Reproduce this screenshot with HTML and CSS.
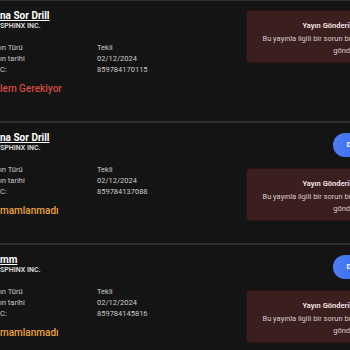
FILE: index.html
```html
<!DOCTYPE html>
<html lang="tr">
<head>
    <meta charset="UTF-8">
    <meta name="viewport" content="width=device-width, initial-scale=1.0">
    <title>Yayınlar</title>
    <link rel="stylesheet" href="styles.css">
</head>
<body>
    <div class="release-list">

        <div class="release-card">
            <div class="release-info">
                <a class="release-title" href="#">na Sor Drill</a>
                <div class="release-label">SPHINX INC.</div>
                <div class="release-meta">
                    <span>ın Türü</span><span>Tekli</span>
                    <span>ın tarihi</span><span>02/12/2024</span>
                    <span>C:</span><span>859784170115</span>
                </div>
                <div class="release-status status-error">lem Gerekiyor</div>
            </div>
            <div class="release-side">
                <div class="alert">
                    <div class="alert-title">Yayın Gönderilirken Hata Oluştu</div>
                    <div class="alert-text">Bu yayınla ilgili bir sorun bulunuyor ve yayın tarafımızdan<br>gönderilmedi.</div>
                </div>
            </div>
        </div>

        <div class="release-card">
            <div class="release-info">
                <a class="release-title" href="#">na Sor Drill</a>
                <div class="release-label">SPHINX INC.</div>
                <div class="release-meta">
                    <span>ın Türü</span><span>Tekli</span>
                    <span>ın tarihi</span><span>02/12/2024</span>
                    <span>C:</span><span>859784137088</span>
                </div>
                <div class="release-status status-pending">mamlanmadı</div>
            </div>
            <div class="release-side">
                <a class="button" href="#">Dağıt</a>
                <div class="alert">
                    <div class="alert-title">Yayın Gönderilirken Hata Oluştu</div>
                    <div class="alert-text">Bu yayınla ilgili bir sorun bulunuyor ve yayın tarafımızdan<br>gönderilmedi.</div>
                </div>
            </div>
        </div>

        <div class="release-card">
            <div class="release-info">
                <a class="release-title" href="#">mm</a>
                <div class="release-label">SPHINX INC.</div>
                <div class="release-meta">
                    <span>ın Türü</span><span>Tekli</span>
                    <span>ın tarihi</span><span>02/12/2024</span>
                    <span>C:</span><span>859784145816</span>
                </div>
                <div class="release-status status-pending">mamlanmadı</div>
            </div>
            <div class="release-side">
                <a class="button" href="#">Dağıt</a>
                <div class="alert">
                    <div class="alert-title">Yayın Gönderilirken Hata Oluştu</div>
                    <div class="alert-text">Bu yayınla ilgili bir sorun bulunuyor ve yayın tarafımızdan<br>gönderilmedi.</div>
                </div>
            </div>
        </div>

    </div>
</body>
</html>
```

FILE: styles.css
```css
body {
    font-family: 'Roboto', 'Liberation Sans', sans-serif;
    background-color: #141414;
    margin: 0;
    padding: 0;
    overflow: hidden;
}

.release-list {
    width: 466px;
    margin-top: -1px;
}

.release-card {
    display: flex;
    justify-content: space-between;
    height: 120px;
    border-top: 2px solid #303030;
}

.release-info {
    padding-top: 9px;
}

.release-title {
    display: block;
    font-size: 10px;
    line-height: 12px;
    font-weight: bold;
    color: #fff;
    text-decoration: underline;
}

.release-label {
    font-size: 7px;
    line-height: 9px;
    font-weight: bold;
    color: #d2d2d2;
}

.release-meta {
    display: grid;
    grid-template-columns: 97px auto;
    margin-top: 11px;
    font-size: 7.5px;
    line-height: 11px;
    color: #cacaca;
}

.release-status {
    margin-top: 8px;
    font-size: 10px;
    line-height: 12px;
    font-weight: 500;
}

.status-error {
    color: #d64a41;
}

.status-pending {
    color: #eaa23c;
}

.release-side {
    width: 220px;
    padding-top: 9px;
    display: flex;
    flex-direction: column;
    align-items: center;
}

.button {
    margin-top: 1px;
    margin-bottom: 11px;
    height: 24px;
    padding: 0 14px;
    border-radius: 12px;
    background: linear-gradient(90deg, #4c7ef5, #3462ea);
    color: #fff;
    font-size: 8px;
    line-height: 24px;
    font-weight: bold;
    text-decoration: none;
}

.alert {
    width: 100%;
    box-sizing: border-box;
    padding: 9px 10px 4px;
    background-color: #3b1e1e;
    border: 1px solid #2a1515;
    border-radius: 4px;
    text-align: center;
}

.alert-title {
    font-size: 7.5px;
    line-height: 12.5px;
    font-weight: bold;
    color: #eadede;
}

.alert-text {
    font-size: 7.5px;
    line-height: 12.5px;
    color: #d9cccc;
}
```
